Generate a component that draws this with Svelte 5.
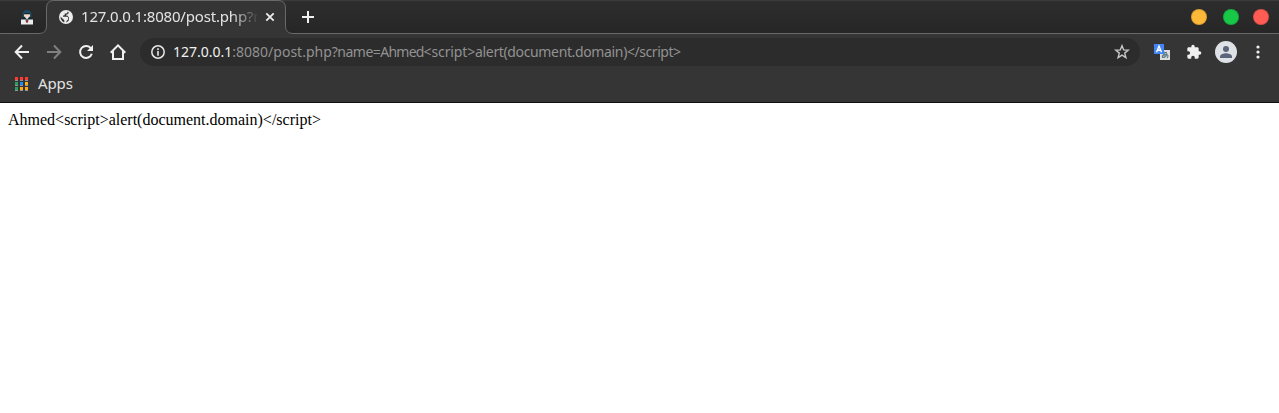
<script>
  const title = '127.0.0.1:8080/post.php?n';
  const host = '127.0.0.1';
  const path = ':8080/post.php';
  const body = 'Ahmed<script>alert(document.domain)</' + 'script>';
  const dots = ['#ff3a30', '#ff3a30', '#ff3a30', '#24a45a', '#128cff', '#ffad14', '#24a45a', '#ffad14', '#ffad14'];
</script>

<div class="browser">
  <div class="tabs">
    <svg class="strip" width="1279" height="34" viewBox="0 0 1279 34">
      <path d="M0 33.5H39Q46.5 33.5 46.5 26V8Q46.5 .5 54 .5H278Q285.500 .5 285.500 8V26Q285.500 33.500 293 33.500H1279V35H0Z" fill="#353535" stroke="#696969" />
    </svg>
    <div class="pinned">
      <svg width="14" height="16" viewBox="0 0 14 16">
        <path d="M2.500 8V4L4 1.800L7 .8L10 1.800L11.500 4V8Z" fill="#1d4a62" />
        <path d="M4 4.500H10V7L8.500 9.500H5.500L4 7Z" fill="#f1d8c2" />
        <path d="M4 4H10V5.300H4Z" fill="#152c38" />
        <path d="M1 11L3.500 8H5L7 10L9 8H10.500L13 11Z" fill="#152c38" />
        <path d="M5.300 8H8.700L7 10.500Z" fill="#eee" />
        <path d="M1 10.500H13V15.500H1Z" fill="#ececec" />
        <path d="M5.500 10.500H8.500L8 13.500H6Z" fill="#424850" />
        <path d="M6.200 11H7.800V13.500H6.200Z" fill="#a52e38" />
      </svg>
    </div>
    <div class="tab">
      <svg class="globe" width="14" height="14" viewBox="0 0 14 14">
        <circle cx="7" cy="7" r="7" fill="#ededed" />
        <path d="M8.500 1.600V2.200Q8.500 3.600 7 3.600H5.700V4.700Q5.700 5.500 4.700 5.500H4V6.700H8Q9 6.700 9 7.700V9.300Q9 10 8.200 10.200Q7.300 10.500 7.300 12.500Q6 12.700 5 12.200Q6 11.300 5.200 10.200Q4.700 9.600 4 9L1.500 6.500Q1.200 9.500 3.300 11.300Q5.200 13 7.600 12.500L9.800 10.500V7.300L8.300 5.600H7L7.200 4.800Q9.800 4.400 9.800 2.200Z" fill="#353535" />
      </svg>
      <span class="title">{title}</span>
      <svg class="close" width="10" height="10" viewBox="0 0 10 10"><path d="M1.300 1.300L8.700 8.700M8.700 1.300L1.300 8.700" stroke="#ededed" stroke-width="1.8" /></svg>
    </div>
    <svg class="plus" width="12" height="12" viewBox="0 0 12 12"><path d="M6 0V12M0 6H12" stroke="#f0f0f0" stroke-width="2" /></svg>
    <div class="controls"><i class="yellow"></i><i class="green"></i><i class="red"></i></div>
  </div>

  <div class="toolbar">
    <svg class="nav" width="16" height="16" viewBox="0 0 16 16"><path d="M15 8H2M8 1.500L1.700 8L8 14.500" fill="none" stroke="#f0f0f0" stroke-width="2" /></svg>
    <svg class="nav" width="16" height="16" viewBox="0 0 16 16"><path d="M1 8H14M8 1.500L14.300 8L8 14.500" fill="none" stroke="#808080" stroke-width="2" /></svg>
    <svg class="nav" width="16" height="16" viewBox="0 0 16 16"><path d="M13 4.500A6 6 0 1 0 13.800 9.800" fill="none" stroke="#f0f0f0" stroke-width="2" /><path d="M15 1V7H9Z" fill="#f0f0f0" /></svg>
    <svg class="nav" width="16" height="16" viewBox="0 0 16 16"><path d="M.7 8.700L8 1.400L15.300 8.700M3 7V15H13V7" fill="none" stroke="#f0f0f0" stroke-width="2" /></svg>
    <div class="omnibox">
      <svg class="info" width="14" height="14" viewBox="0 0 14 14"><circle cx="7" cy="7" r="6.200" fill="none" stroke="#e8e8e8" stroke-width="1.500" /><path d="M7 3.300V4.900M7 6V10.700" stroke="#e8e8e8" stroke-width="1.600" /></svg>
      <span class="url"><b>{host}</b>{path}<span class="query">?name=</span><span class="name">Ahmed</span><span class="tag">&lt;script&gt;</span><span class="call">alert(document.domain)</span><span class="end">&lt;/script&gt;</span></span>
      <svg class="star" width="16" height="16" viewBox="0 0 16 16"><path d="M8 1.700L9.700 5.900L14.200 6.200L10.700 9.100L11.900 13.600L8 11.100L4.100 13.600L5.300 9.100L1.800 6.200L6.300 5.900Z" fill="none" stroke="#c8c8c8" stroke-width="1.400" /></svg>
    </div>
    <svg class="translate" width="16" height="16" viewBox="0 0 16 16">
      <path d="M6 6H16V16H6Z" fill="#dedede" />
      <path d="M8 8.700H13M10 7.500V12M13 9.500Q12 13.500 8.500 13.500Q7.500 10.500 12 10.300Q15.500 11 13 14" fill="none" stroke="#607d8b" stroke-width="1.200" />
      <path d="M0 0H10V10H0Z" fill="#4285f4" />
      <path d="M2.500 8.200L5 2L7.500 8.200M3.500 6.200H6.500" fill="none" stroke="#fff" stroke-width="1.400" />
    </svg>
    <svg class="puzzle" width="16" height="16" viewBox="0 0 24 24"><path d="M20.500 11H19V7c0-1.100-.9-2-2-2h-4V3.500a2.500 2.500 0 0 0-5 0V5H4c-1.100 0-2 .9-2 2v3.800h1.500a2.700 2.700 0 0 1 0 5.400H2V20c0 1.100.9 2 2 2h3.800v-1.500a2.700 2.700 0 0 1 5.400 0V22H17c1.100 0 2-.9 2-2v-4h1.500a2.500 2.500 0 0 0 0-5z" fill="#f0f0f0" /></svg>
    <svg class="avatar" width="22" height="22" viewBox="0 0 22 22"><circle cx="11" cy="11" r="11" fill="#dee1e6" /><circle cx="11" cy="8" r="3" fill="#5a6579" /><path d="M5 17V15.500C5 13.300 9 12.300 11 12.300S17 13.300 17 15.500V17Z" fill="#5a6579" /></svg>
    <svg class="menu" width="4" height="14" viewBox="0 0 4 14"><circle cx="2" cy="2" r="1.600" fill="#f0f0f0" /><circle cx="2" cy="7" r="1.600" fill="#f0f0f0" /><circle cx="2" cy="12" r="1.600" fill="#f0f0f0" /></svg>
  </div>

  <div class="bookmarks">
    <div class="grid">{#each dots as color}<i style:background-color={color}></i>{/each}</div>
    <span class="apps">Apps</span>
  </div>
</div>
<main>{body}</main>

<style>
  :global(body) { margin: 0; background: #fff; overflow: hidden; }
  svg { display: block; flex: none; }
  .browser { height: 103px; box-sizing: border-box; background: #353535; border-bottom: 1px solid #111; font-family: "Noto Sans", sans-serif; color: #e3e3e3; }
  .tabs { position: relative; display: flex; align-items: center; height: 34px; background: linear-gradient(#3b3b3b 0, #3b3b3b 1px, #2d2d2d 1px, #262626); }
  .strip { position: absolute; inset: 0; }
  .pinned, .tab, .plus, .controls { position: relative; }
  .pinned { width: 26px; padding-left: 20px; }
  .tab { display: flex; align-items: center; width: 240px; }
  .globe { margin-left: 13px; }
  .title { width: 176px; margin-left: 8px; padding-bottom: 2px; overflow: hidden; white-space: nowrap; font-size: 15px; letter-spacing: -.18px; line-height: 20px; -webkit-mask-image: linear-gradient(90deg, #000 150px, transparent 178px); mask-image: linear-gradient(90deg, #000 150px, transparent 178px); }
  .close { margin-left: 8px; }
  .plus { margin-left: 16px; }
  .controls { display: flex; margin: 0 10px 0 auto; }
  .controls i { width: 16px; height: 16px; border-radius: 50%; box-sizing: border-box; border: 1px solid #0002; }
  .yellow { background: #ffb938; }
  .green { background: #18c947; margin: 0 14px 0 16px; }
  .red { background: #ff5c54; }
  .toolbar { display: flex; align-items: center; height: 36px; padding-left: 14px; }
  .nav { margin-right: 16px; }
  .omnibox { display: flex; align-items: center; width: 1000px; height: 28px; margin-left: -2px; border-radius: 14px; background: #2c2c2c; }
  .info { margin-left: 11px; }
  .url { margin-left: 8px; white-space: nowrap; font-size: 14px; line-height: 20px; color: #929292; }
  .url b { font-weight: 400; color: #f0f0f0; }
  .query { letter-spacing: -.5px; }
  .name { letter-spacing: -.8px; }
  .tag { letter-spacing: -.12px; }
  .call { letter-spacing: -.36px; }
  .end { letter-spacing: -.45px; }
  .star { margin: 0 10px 0 auto; }
  .translate { margin-left: 14px; }
  .puzzle { margin-left: 16px; }
  .avatar { margin-left: 13px; }
  .menu { margin-left: 19px; }
  .bookmarks { display: flex; align-items: center; height: 28px; padding-left: 15px; font-size: 15px; letter-spacing: -.1px; }
  .apps { padding-bottom: 2px; line-height: 20px; }
  .grid { display: grid; grid-template-columns: repeat(3, 3px); gap: 1px 2px; margin-right: 10px; }
  .grid i { height: 3px; border-bottom: 1px solid #92929b; background-clip: padding-box; }
  main { margin: 8px; font: 16px/18px "Liberation Serif", serif; color: #000; }
</style>
